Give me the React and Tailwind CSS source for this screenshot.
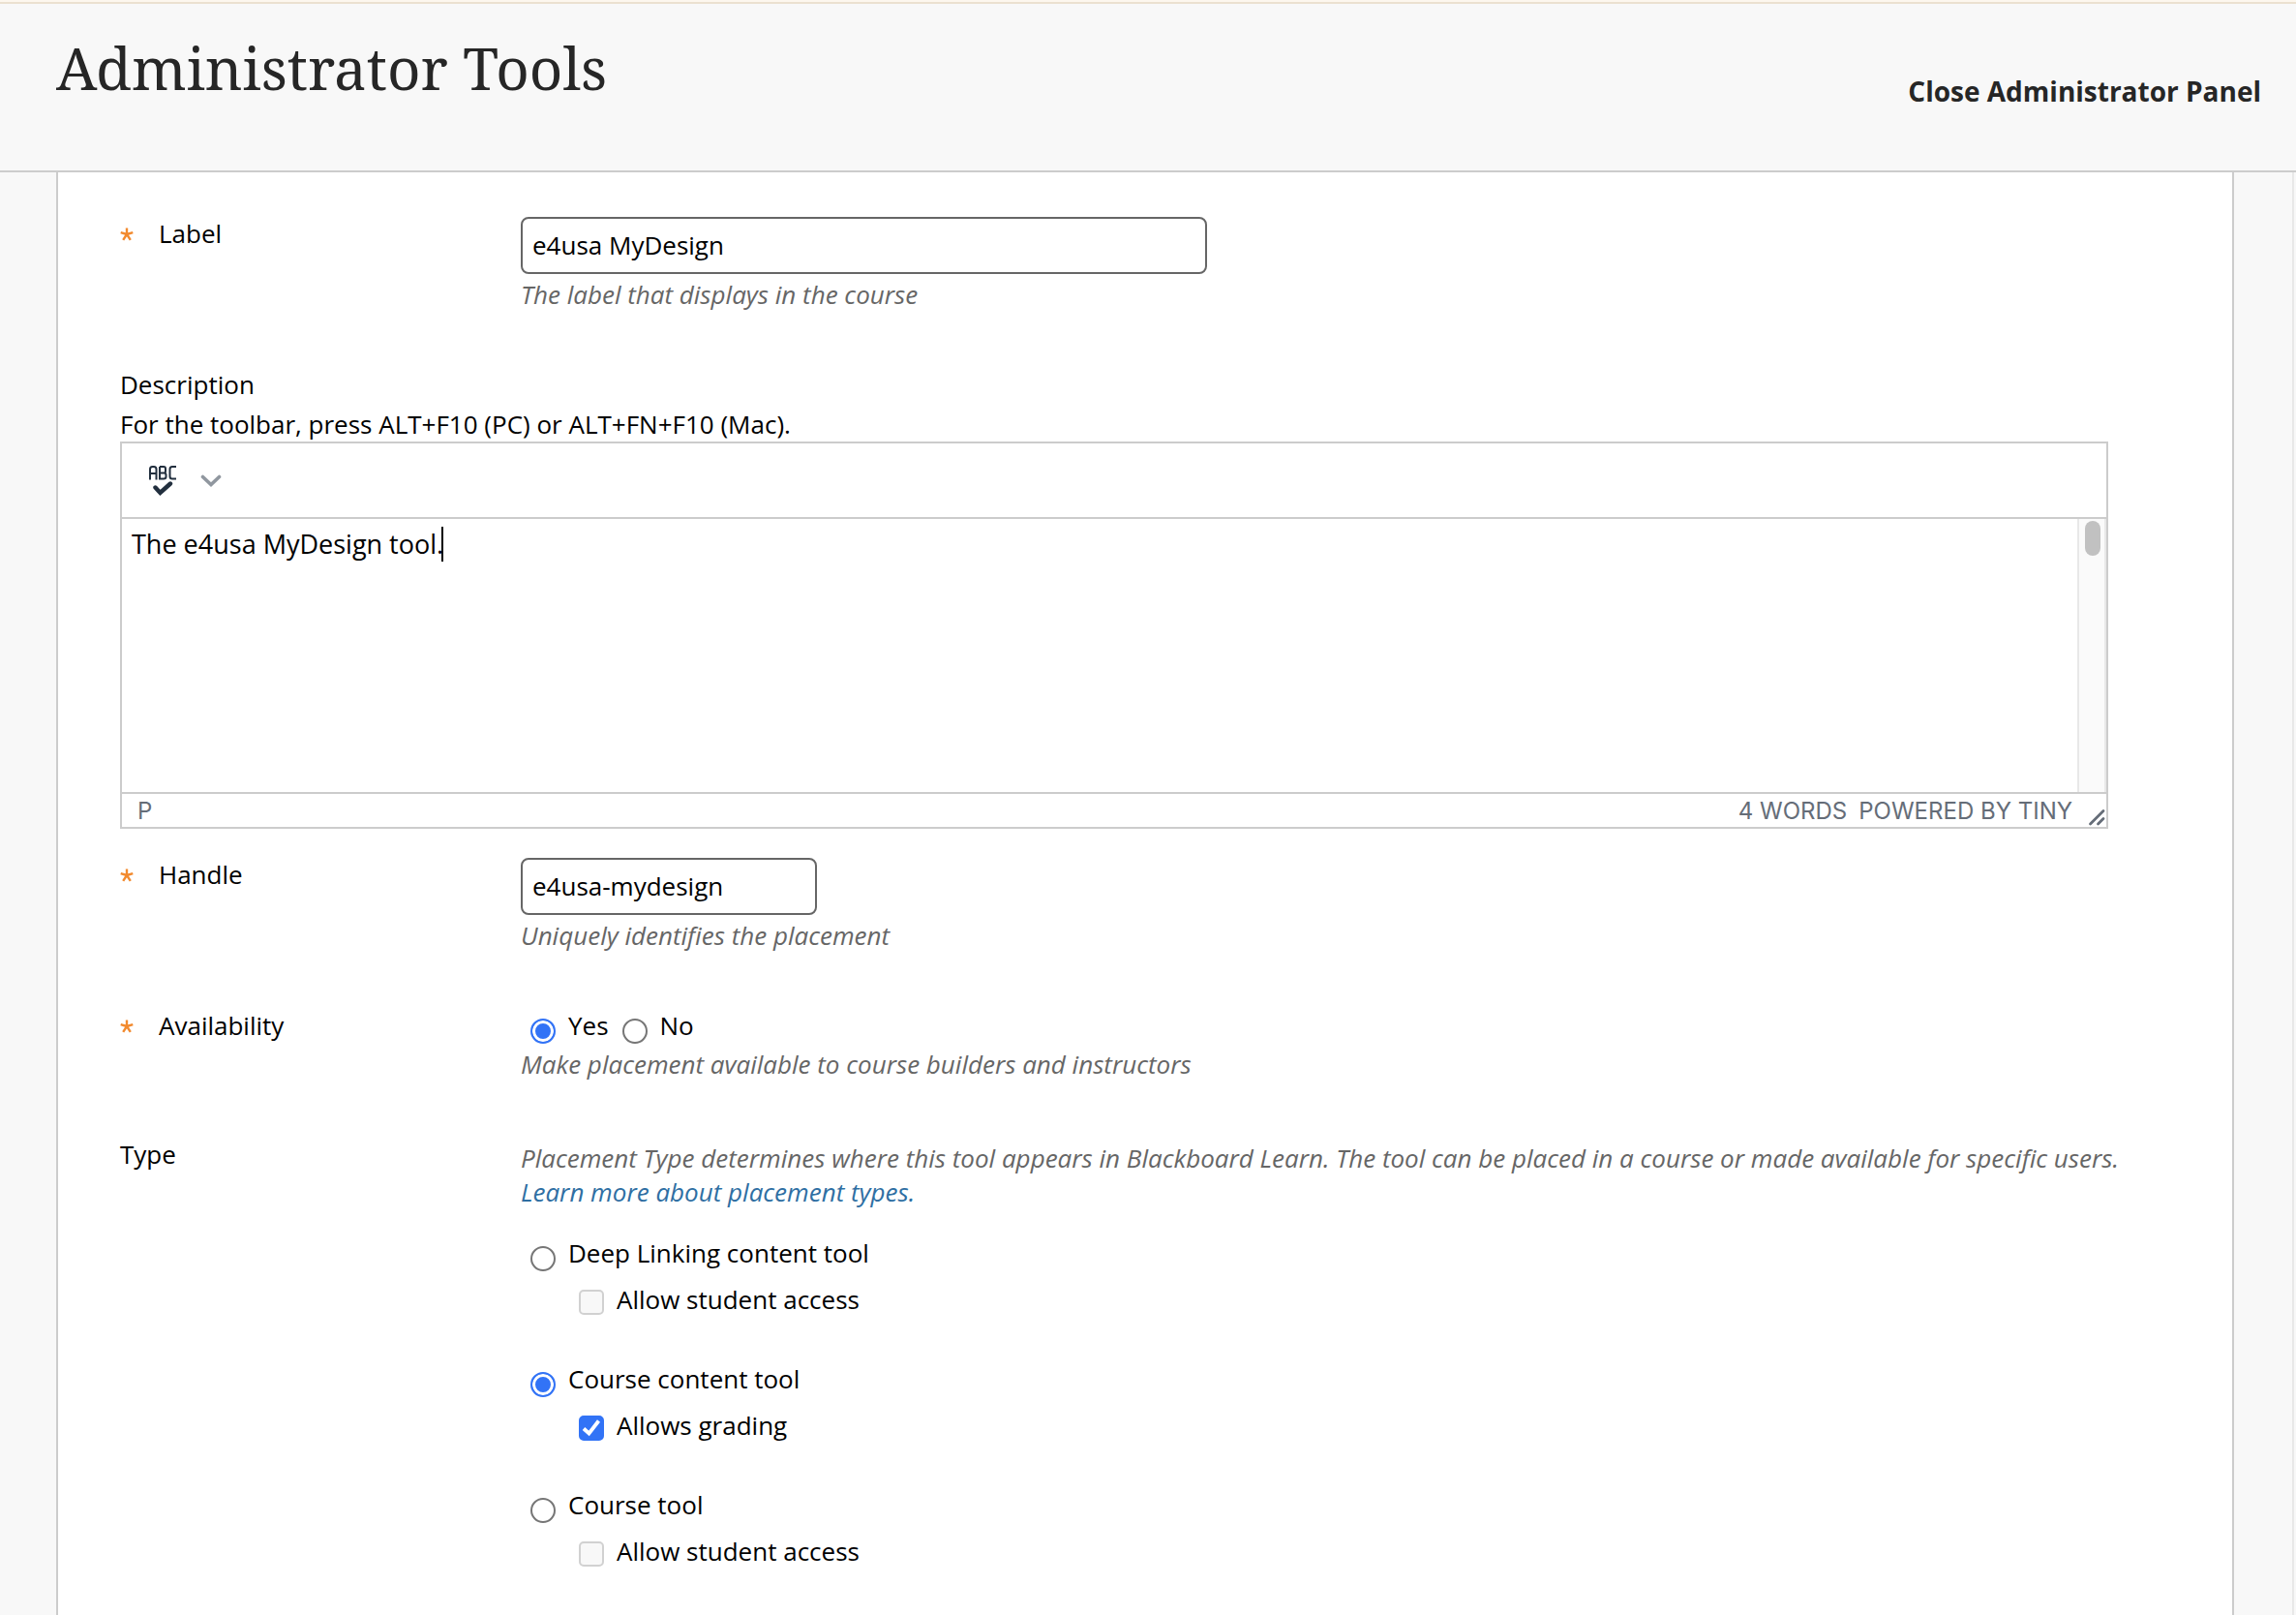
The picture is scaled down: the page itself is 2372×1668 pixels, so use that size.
import React from 'react';

const inputClass =
  'mt-px block h-[59px] rounded-lg border-2 border-[#666] bg-white px-2.5 pb-0.5 text-[26px] leading-[36px] text-black';

const placementTypes = [
  { id: 'deep-linking', label: 'Deep Linking content tool', option: 'Allow student access' },
  { id: 'course-content', label: 'Course content tool', option: 'Allows grading', selected: true },
  { id: 'course-tool', label: 'Course tool', option: 'Allow student access' },
];

const RequiredMark = () => (
  <svg viewBox="0 0 14 14" className="mt-3 h-3.5 w-3.5 shrink-0" aria-label="Required">
    <path
      d="M7 7V0.5M7 7L0.7 5.2M7 7L13.3 5.2M7 7L3.2 12.8M7 7L10.8 12.8"
      stroke="#f28a2e"
      strokeWidth="2.4"
      fill="none"
    />
  </svg>
);

const Hint = ({ children }) => <p className="mt-[3px] leading-[36px] text-[#666] italic">{children}</p>;

const Radio = (props) => (
  <input
    type="radio"
    className="mt-[11px] h-[26px] w-[26px] shrink-0 appearance-none rounded-full border-2 border-[#767676] bg-white checked:border-[#3273f6] checked:bg-[#3273f6] checked:shadow-[inset_0_0_0_3px_#fff]"
    {...props}
  />
);

const Checkbox = ({ id, checked, disabled }) => (
  <span className="relative mt-2 block h-[26px] w-[26px] shrink-0">
    <input
      id={id}
      type="checkbox"
      defaultChecked={checked}
      disabled={disabled}
      className="block h-[26px] w-[26px] appearance-none rounded-[5px] border-2 border-[#767676] checked:border-[#3273f6] checked:bg-[#3273f6] disabled:border-[#d1d1d1] disabled:bg-[#f8f8f8]"
    />
    {checked && (
      <svg viewBox="0 0 26 26" className="pointer-events-none absolute inset-0">
        <path d="M5 13.5L10.5 18.5L20.5 5.5" stroke="#fff" strokeWidth="3.8" fill="none" />
      </svg>
    )}
  </span>
);

const FieldRow = ({ label, htmlFor, required, children }) => (
  <div className="flex">
    <div className="flex w-[414px] shrink-0 items-start gap-[26px]">
      {required && <RequiredMark />}
      <label htmlFor={htmlFor}>{label}</label>
    </div>
    <div className="min-w-0 flex-1">{children}</div>
  </div>
);

const Editor = () => (
  <div className="mr-16 border-2 border-[#ccc] bg-white">
    <div className="flex h-[78px] items-center border-b-2 border-[#ccc] pt-0.5 pl-7">
      <button type="button" aria-label="Spellcheck" className="block">
        <svg viewBox="0 0 28 32" className="h-8 w-7" fill="none" stroke="#222f3e">
          <path d="M1 14.5V3.5Q1 1 3.5 1H5Q7.5 1 7.5 3.5V14.5M1 8H7.5" strokeWidth="2" />
          <path d="M11 1V13.5H15Q17.5 13.5 17.5 11.5V9.5Q17.5 7.5 15.5 7.5H11M15.5 7.5Q17 7.5 17 5.5V3Q17 1 15 1H11" strokeWidth="2" />
          <path d="M28 1H24Q21.5 1 21.5 3.5V11Q21.5 13.5 24 13.5H28" strokeWidth="2" />
          <path d="M6.5 22.5L11.5 28L22 18.5" strokeWidth="4.4" strokeLinecap="round" />
        </svg>
      </button>
      <button type="button" aria-label="Spellcheck language" className="ml-[25px] block">
        <svg viewBox="0 0 22 14" className="h-3.5 w-[22px]" fill="none" stroke="#90979f">
          <path d="M2.5 2.5L11 10.5L19.5 2.5" strokeWidth="3.6" strokeLinecap="round" />
        </svg>
      </button>
    </div>
    <div className="relative flex h-[282px]">
      <textarea
        id="description"
        defaultValue="The e4usa MyDesign tool."
        className="block h-full min-w-0 flex-1 resize-none overflow-hidden px-2.5 py-2 text-[27px] leading-[36px] text-black outline-none"
      />
      <span className="absolute top-2 left-[330px] h-9 w-0.5 bg-black" />
      <div className="w-[30px] border-x-2 border-[#e8e8e8] bg-[#fafafa]">
        <div className="mt-0.5 ml-[6px] h-9 w-4 rounded-full bg-[#c1c1c1]" />
      </div>
    </div>
    <div className="flex h-9 items-center border-t-2 border-[#ccc] pt-0.5 pl-4 font-['Inter',sans-serif] text-[24px] leading-[32px] text-[#656d78]">
      <span>P</span>
      <span className="ml-auto">4 WORDS</span>
      <span className="ml-3">POWERED BY TINY</span>
      <svg viewBox="0 0 18 18" className="mt-3 mr-px ml-4 h-[18px] w-[18px]" fill="none" stroke="#656d78" strokeWidth="2.8" strokeLinecap="round">
        <path d="M2.5 16L16 2.5M10.5 16L16 10.5" />
      </svg>
    </div>
  </div>
);

const App = () => {
  return (
    <div className="flex min-h-screen flex-col bg-[#f8f8f8] font-['Open_Sans','Noto_Sans',sans-serif] text-[26px] leading-[36px] text-black">
      <header className="border-t-2 border-[#fdf7ee]">
        <div className="flex h-44 items-start justify-between border-t-2 border-b-2 border-t-[#ebe1d0] border-b-[#ccc] pr-9 pl-[58px] text-[#262626]">
          <h1 className="mt-[26px] font-['Noto_Serif','Liberation_Serif',serif] text-[60px] leading-[80px]">
            Administrator Tools
          </h1>
          <button type="button" className="mt-[70px] text-[28px] leading-[40px] font-bold">
            Close Administrator Panel
          </button>
        </div>
      </header>

      <div className="flex flex-1 pl-[58px]">
        <main className="min-w-0 flex-1 border-x-2 border-[#ccc] bg-white pt-[45px] pr-16 pb-10 pl-16">
          <form>
            <FieldRow label="Label" htmlFor="label" required>
              <input id="label" type="text" defaultValue="e4usa MyDesign" className={`${inputClass} w-[709px]`} />
              <Hint>The label that displays in the course</Hint>
            </FieldRow>

            <div className="mt-[57px] flex flex-col gap-[5px]">
              <label htmlFor="description">Description</label>
              <p>For the toolbar, press ALT+F10 (PC) or ALT+FN+F10 (Mac).</p>
            </div>
            <Editor />

            <div className="mt-[29px] flex flex-col gap-[57px]">
              <FieldRow label="Handle" htmlFor="handle" required>
                <input id="handle" type="text" defaultValue="e4usa-mydesign" className={`${inputClass} w-[306px]`} />
                <Hint>Uniquely identifies the placement</Hint>
              </FieldRow>

              <FieldRow label="Availability" required>
                <div className="flex pl-2.5">
                  <Radio id="available-yes" name="availability" defaultChecked />
                  <label htmlFor="available-yes" className="mr-3.5 ml-[13px]">Yes</label>
                  <Radio id="available-no" name="availability" />
                  <label htmlFor="available-no" className="ml-[13px]">No</label>
                </div>
                <Hint>Make placement available to course builders and instructors</Hint>
              </FieldRow>

              <FieldRow label="Type">
                <p className="pt-[5px] leading-[35px] text-[#666] italic">
                  Placement Type determines where this tool appears in Blackboard Learn. The tool can be placed in a
                  course or made available for specific users.{' '}
                  <a href="#placement-types" className="text-[#2f6fa3]">Learn more about placement types.</a>
                </p>
                <div className="mt-[27px] flex flex-col gap-[46px] pl-2.5">
                  {placementTypes.map((type) => (
                    <div key={type.id} className="flex flex-col gap-[11px]">
                      <div className="flex gap-[13px]">
                        <Radio id={type.id} name="type" defaultChecked={type.selected} />
                        <label htmlFor={type.id}>{type.label}</label>
                      </div>
                      <div className="flex gap-[13px] pl-[50px]">
                        <Checkbox id={`${type.id}-option`} checked={type.selected} disabled={!type.selected} />
                        <label htmlFor={`${type.id}-option`}>{type.option}</label>
                      </div>
                    </div>
                  ))}
                </div>
              </FieldRow>
            </div>
          </form>
        </main>
        <div className="ml-[60px] w-1 border-l-2 border-[#e8e8e8]" />
      </div>
    </div>
  );
};

export default App;
